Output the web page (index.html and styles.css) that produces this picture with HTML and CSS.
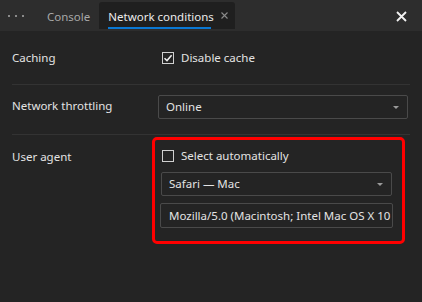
FILE: index.html
```html
<!DOCTYPE html>
<html lang="en">
<head>
    <meta charset="UTF-8">
    <title>Network conditions</title>
    <link rel="stylesheet" href="styles.css">
</head>
<body>
    <!--tab bar-->
    <div class="tabbar">
        <div class="more">
            <span></span><span></span><span></span>
        </div>
        <div class="tab">Console</div>
        <div class="tab active">
            Network conditions
            <svg class="tab-close" width="7" height="7" viewBox="0 0 7 7"><path d="M0.5 0.5L6.5 6.5M6.5 0.5L0.5 6.5" stroke="#8a8a8a" stroke-width="1.1"/></svg>
        </div>
        <div class="spacer"></div>
        <svg class="close" width="11" height="11" viewBox="0 0 11 11"><path d="M1 1L10 10M10 1L1 10" stroke="#f2f2f2" stroke-width="1.8"/></svg>
    </div>

    <!--settings-->
    <div class="panel">
        <div class="row caching">
            <div class="label">Caching</div>
            <div class="control">
                <label class="check">
                    <span class="box on">
                        <svg width="10" height="10" viewBox="0 0 10 10"><path d="M1.5 5.2L4 7.6L8.6 2.2" fill="none" stroke="#f0f0f0" stroke-width="1.5"/></svg>
                    </span>
                    Disable cache
                </label>
            </div>
        </div>
        <div class="row throttle">
            <div class="label">Network throttling</div>
            <div class="control">
                <div class="select wide">Online<i class="arrow"></i></div>
            </div>
        </div>
        <div class="row agent">
            <div class="label">User agent</div>
            <div class="control">
                <div class="highlight">
                    <label class="check">
                        <span class="box"></span>
                        Select automatically
                    </label>
                    <div class="select">Safari — Mac<i class="arrow"></i></div>
                    <div class="input">Mozilla/5.0 (Macintosh; Intel Mac OS X 10</div>
                </div>
            </div>
        </div>
    </div>
</body>
</html>
```

FILE: styles.css
```css
*{
    padding: 0;
    margin: 0;
    box-sizing: border-box;
}
body{
    background-color: #242424;
    color: #e3e3e3;
    font-family: "Noto Sans", "Open Sans", sans-serif;
    font-size: 11.5px;
    width: 422px;
    height: 302px;
    overflow: hidden;
}
.tabbar{
    display: flex;
    align-items: flex-start;
    height: 31px;
    background-color: #2d2d2d;
}
.tabbar .more{
    display: flex;
    gap: 5px;
    width: 40px;
    height: 31px;
    padding: 15px 0 0 8px;
}
.tabbar .more span{
    width: 2px;
    height: 2px;
    background-color: #8a8a8a;
}
.tabbar .tab{
    display: flex;
    align-items: center;
    height: 27px;
    margin-top: 2px;
    padding: 2px 9px 0 7px;
    color: #a8a8a8;
    white-space: nowrap;
}
.tabbar .tab.active{
    position: relative;
    padding: 2px 7px 0 9px;
    background-color: #1f1f1f;
    border-radius: 3px 3px 0 0;
    color: #ececec;
    gap: 7px;
}
.tabbar .tab.active::after{
    content: "";
    position: absolute;
    left: 9px;
    bottom: 0;
    width: 103px;
    height: 2px;
    background-color: #0a78d4;
}
.tabbar .tab-close{
    margin-top: -3px;
}
.tabbar .spacer{
    flex: 1;
}
.tabbar .close{
    margin: 11px 15px 0 0;
}
.panel{
    padding: 0 12px;
}
.row{
    display: flex;
    border-bottom: 1px solid #333333;
}
.row .label{
    width: 146px;
}
.row .control{
    flex: 1;
}
.caching{
    height: 54px;
    align-items: center;
}
.throttle{
    height: 50px;
    padding-top: 10px;
}
.throttle .label{
    padding-top: 3px;
}
.agent{
    border-bottom: none;
    padding-top: 2px;
}
.agent .label{
    padding-top: 12px;
}
.check{
    display: flex;
    align-items: center;
    gap: 7px;
    padding-left: 4px;
}
.check .box{
    display: flex;
    align-items: center;
    justify-content: center;
    width: 12px;
    height: 12px;
    border: 1px solid #d0d0d0;
}
.select{
    position: relative;
    height: 24px;
    line-height: 22px;
    padding-left: 7px;
    border: 1px solid #4a4a4a;
    border-radius: 2px;
    background-color: #242424;
}
.select.wide{
    width: 250px;
}
.select .arrow{
    position: absolute;
    right: 8px;
    top: 10px;
    border-left: 3px solid transparent;
    border-right: 3px solid transparent;
    border-top: 3px solid #9a9a9a;
}
.highlight{
    display: flex;
    flex-direction: column;
    width: 253px;
    margin-left: -6px;
    padding: 9px 12px 13px 3px;
    border: 3px solid #ff0000;
    border-radius: 5px;
}
.highlight .check{
    height: 13px;
    margin-bottom: 10px;
}
.highlight .select{
    width: 231px;
    margin-left: 3px;
    margin-bottom: 7px;
}
.input{
    width: 233px;
    height: 25px;
    margin-left: 2px;
    line-height: 23px;
    padding-left: 8px;
    border: 1px solid #4a4a4a;
    border-radius: 2px;
    white-space: nowrap;
    overflow: hidden;
}
```
